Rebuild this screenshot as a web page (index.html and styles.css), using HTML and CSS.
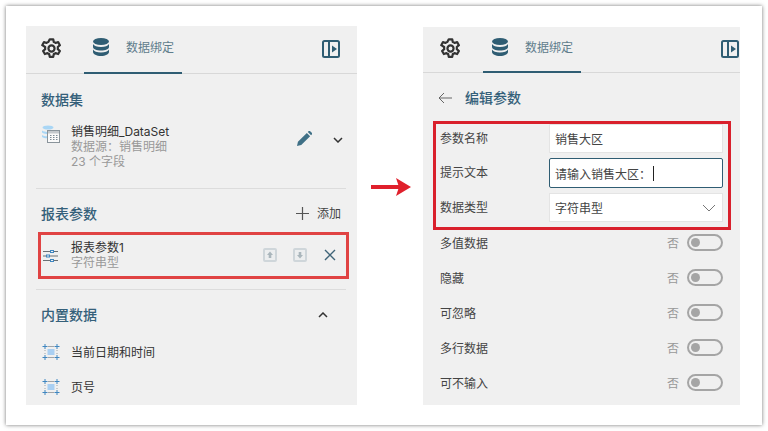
FILE: index.html
```html
<!DOCTYPE html>
<html lang="zh">
<head>
<meta charset="utf-8">
<title>数据绑定</title>
<link rel="stylesheet" href="styles.css">
</head>
<body>
<svg class="defs" width="0" height="0" aria-hidden="true">
  <defs>
    <symbol id="gear" viewBox="0 0 24 24"><path fill="none" stroke="#333" stroke-width="2.500" stroke-linejoin="round" d="M10 1.500h4l.6 3.100a7.500 7.500 0 0 1 2 1.100l3-1 2 3.500-2.400 2.100a7.500 7.500 0 0 1 0 2.400l2.400 2.100-2 3.500-3-1a7.500 7.500 0 0 1-2 1.100l-.6 3.100h-4l-.6-3.100a7.500 7.500 0 0 1-2-1.100l-3 1-2-3.500 2.400-2.100a7.500 7.500 0 0 1 0-2.400L1.400 8.200l2-3.500 3 1a7.500 7.500 0 0 1 2-1.100z"/><circle cx="12" cy="12" r="3.500" fill="none" stroke="#333" stroke-width="2.500"/></symbol>
    <symbol id="db" viewBox="0 0 16 18"><ellipse cx="8" cy="3.500" rx="8" ry="3.500" fill="#2f5d73"/><path fill="#2f5d73" d="M0 6c1 2 4 3 8 3s7-1 8-3v3c0 2-3.500 3.500-8 3.500S0 11 0 9zM0 11.500c1 2 4 3 8 3s7-1 8-3V14c0 2.200-3.500 4-8 4s-8-1.800-8-4z"/></symbol>
    <symbol id="dock" viewBox="0 0 18 18"><rect x="1" y="1" width="16" height="16" rx="1.500" fill="none" stroke="#2f5d73" stroke-width="2"/><path d="M7 1v16" stroke="#2f5d73" stroke-width="2"/><path d="M10 5.500l5 3.500-5 3.500z" fill="#2f5d73"/></symbol>
    <symbol id="field" viewBox="0 0 18 16"><path d="M6 2.500h6M6 13.500h6M3 6v1M3 9v1M15 6v1M15 9v1" stroke="#a0a4a8" fill="none"/><path d="M3 0v5M.5 2.500h5M15 0v5M12.500 2.500h5M3 11v5M.5 13.500h5M15 11v5M12.500 13.500h5" stroke="#3f86c0" fill="none"/><rect x="5.500" y="5" width="7" height="6" fill="#a9cff2"/></symbol>
    <symbol id="toggle" viewBox="0 0 36 17"><rect x="1" y="1" width="34" height="15" rx="7.500" fill="none" stroke="#a5a5a5" stroke-width="2"/><circle cx="8.500" cy="8.500" r="4.500" fill="#a5a5a5"/></symbol>
  </defs>
</svg>
<main class="card">
  <section class="panel panel-left">
    <header class="tabs">
      <svg class="gear"><use href="#gear"/></svg>
      <div class="tab">
        <svg class="db"><use href="#db"/></svg>
        <span class="tab-label">数据绑定</span>
      </div>
      <svg class="dock"><use href="#dock"/></svg>
    </header>
    <div class="group group-data">
      <h2 class="heading">数据集</h2>
      <div class="dataset">
        <svg class="ds-icon" viewBox="0 0 18 18">
          <ellipse cx="6" cy="2.500" rx="5.500" ry="2" fill="#a9d6f5"/>
          <path d="M0 5.500c1.500 1 3.500 1.300 5 1.400v2C3 9 1 8.500 0 7.500zM0 10c1 .8 3 1.200 5 1.300v2c-2 0-4-.5-5-1.300z" fill="#a9d6f5"/>
          <rect x="5.500" y="5.500" width="12" height="12" fill="#fafafa" stroke="#8a949b"/>
          <rect x="6" y="6" width="11" height="2.500" fill="#c3c8cc"/>
          <path d="M8 10.500h1.500M11 10.500h1.500M14 10.500h1.500M8 12.500h1.500M11 12.500h1.500M14 12.500h1.500M8 14.500h1.500M11 14.500h1.500M14 14.500h1.500" stroke="#7c8a94"/>
        </svg>
        <div class="ds-text">
          <div class="primary">销售明细_DataSet</div>
          <div class="secondary">数据源：销售明细</div>
          <div class="secondary">23 个字段</div>
        </div>
        <svg class="pencil" viewBox="0 0 16 16"><path fill="#3f7086" d="M0 16l1-4.500L10.500 2l3.500 3.500L4.500 15zM11.500 1l1-1a1 1 0 0 1 1.300 0l2.200 2.200a1 1 0 0 1 0 1.300l-1 1z"/></svg>
        <svg class="chev" viewBox="0 0 10 6"><path d="M1 1l4 4 4-4" fill="none" stroke="#333" stroke-width="1.500"/></svg>
      </div>
    </div>
    <div class="group group-params">
      <div class="heading-row">
        <h2 class="heading">报表参数</h2>
        <span class="add"><svg class="plus" viewBox="0 0 13 13"><path d="M6.500 0v13M0 6.500h13" stroke="#555" stroke-width="1.200"/></svg>添加</span>
      </div>
      <div class="param-row">
        <svg class="param-icon" viewBox="0 0 15 12">
          <path d="M0 1.500h7M11 1.500h4M0 6h3M7 6h8M0 10.500h7M11 10.500h4" stroke="#6b7074"/>
          <rect x="7.500" y="0.500" width="3" height="2" fill="none" stroke="#3f86c0"/>
          <rect x="3.500" y="5" width="3" height="2" fill="none" stroke="#3f86c0"/>
          <rect x="7.500" y="9.500" width="3" height="2" fill="none" stroke="#3f86c0"/>
        </svg>
        <div class="ds-text param-text">
          <div class="primary">报表参数1</div>
          <div class="secondary">字符串型</div>
        </div>
        <svg class="move" viewBox="0 0 14 14"><rect x="1" y="1" width="12" height="12" rx="1" fill="#eceeef" stroke="#cfd6da" stroke-width="2"/><path d="M7 3.500l3 3.500H8.300v3H5.700V7H4z" fill="#aab6bc"/></svg>
        <svg class="move" viewBox="0 0 14 14"><rect x="1" y="1" width="12" height="12" rx="1" fill="#eceeef" stroke="#cfd6da" stroke-width="2"/><path d="M7 10.500L4 7h1.700V4h2.600v3H10z" fill="#aab6bc"/></svg>
        <svg class="close" viewBox="0 0 12 12"><path d="M1 1l10 10M11 1L1 11" stroke="#3f6478" stroke-width="1.400"/></svg>
      </div>
    </div>
    <div class="group group-builtin">
      <div class="heading-row heading-builtin">
        <h2 class="heading">内置数据</h2>
        <svg class="chev chev-up" viewBox="0 0 10 6"><path d="M1 5l4-4 4 4" fill="none" stroke="#333" stroke-width="1.500"/></svg>
      </div>
      <div class="builtin-item"><svg class="field"><use href="#field"/></svg><span class="primary">当前日期和时间</span></div>
      <div class="builtin-item"><svg class="field"><use href="#field"/></svg><span class="primary">页号</span></div>
    </div>
  </section>

  <svg class="arrow" viewBox="0 0 40 18"><path d="M0 7h28v4H0z" fill="#e0202c"/><path d="M25 0l15 9-15 9 3-9z" fill="#e0202c"/></svg>

  <section class="panel panel-right">
    <header class="tabs">
      <svg class="gear"><use href="#gear"/></svg>
      <div class="tab">
        <svg class="db"><use href="#db"/></svg>
        <span class="tab-label">数据绑定</span>
      </div>
      <svg class="dock"><use href="#dock"/></svg>
    </header>
    <div class="edit-title">
      <svg class="back" viewBox="0 0 14 12"><path d="M14 6H1M6 1L1 6l5 5" fill="none" stroke="#666" stroke-width="1"/></svg>
      <h2 class="heading">编辑参数</h2>
    </div>
    <div class="frame">
      <div class="form-row"><span class="label">参数名称</span><div class="input">销售大区</div></div>
      <div class="form-row form-row-tall"><span class="label">提示文本</span><div class="input input-focus">请输入销售大区：<i class="caret"></i></div></div>
      <div class="form-row"><span class="label">数据类型</span><div class="input input-select">字符串型<svg class="select-chev" viewBox="0 0 14 8"><path d="M1 1l6 6 6-6" fill="none" stroke="#777" stroke-width="1"/></svg></div></div>
    </div>
    <div class="switches">
      <div class="switch-row"><span class="label">多值数据</span><span class="no">否</span><svg class="toggle"><use href="#toggle"/></svg></div>
      <div class="switch-row"><span class="label">隐藏</span><span class="no">否</span><svg class="toggle"><use href="#toggle"/></svg></div>
      <div class="switch-row"><span class="label">可忽略</span><span class="no">否</span><svg class="toggle"><use href="#toggle"/></svg></div>
      <div class="switch-row"><span class="label">多行数据</span><span class="no">否</span><svg class="toggle"><use href="#toggle"/></svg></div>
      <div class="switch-row"><span class="label">可不输入</span><span class="no">否</span><svg class="toggle"><use href="#toggle"/></svg></div>
    </div>
  </section>
</main>
</body>
</html>
```
FILE: styles.css
```css
* { box-sizing: border-box; }
html, body { margin: 0; padding: 0; background: #fff; }
body {
  width: 768px;
  height: 431px;
  overflow: hidden;
  padding: 6px;
  font-family: "Inter", "Noto Sans CJK SC", sans-serif;
  font-size: 12px;
  color: #333;
}
.defs { position: absolute; }
.card {
  width: 756px;
  height: 419px;
  background: #fff;
  box-shadow: 0 0 4px rgba(0,0,0,.55);
  display: flex;
  align-items: flex-start;
  padding: 20px 22px 20px 20px;
}
.panel { background: #f0f0f0; height: 379px; overflow: hidden; flex: none; }
.panel-left { width: 331px; }
.panel-right { width: 317px; margin-top: 1px; height: 378px; }
.arrow { width: 40px; height: 18px; margin: 152px 12px 0 14px; flex: none; }

.tabs {
  height: 48px;
  display: flex;
  align-items: center;
  border-bottom: 1px solid #d8d8d8;
  padding-left: 15px;
}
.panel-right .tabs { height: 46px; padding-left: 17px; }
.gear { width: 21px; height: 21px; flex: none; margin-top: -2px; }
.tab {
  width: 98px;
  height: 48px;
  margin-left: 22px;
  padding-left: 9px;
  display: flex;
  align-items: center;
  border-bottom: 2px solid #2f5d73;
}
.panel-right .tab { height: 46px; }
.db { width: 16px; height: 18px; flex: none; margin-top: -3px; }
.tab-label { margin-left: 17px; font-size: 12px; color: #5f7d8c; margin-top: -4px; }
.dock { width: 18px; height: 18px; margin-left: 140px; margin-top: -2px; flex: none; }

.heading { margin: 0; font-size: 14px; font-weight: 500; color: #35607a; line-height: 20px; }

.group { margin: 0 11px 0 10px; padding: 0 5px; border-bottom: 1px solid #dcdcdc; }
.group-data { height: 115px; padding-top: 16px; }
.group-params { height: 101px; padding-top: 15px; }
.group-builtin { border-bottom: 0; padding-top: 15px; }

.dataset { display: flex; align-items: flex-start; margin-top: 14px; }
.ds-icon { width: 18px; height: 18px; margin: 1px 11px 0 1px; flex: none; }
.ds-text { flex: 1; line-height: 15px; }
.primary { font-size: 12px; color: #333; }
.secondary { font-size: 12px; color: #999; }
.pencil { width: 15px; height: 15px; margin: 7px 21px 0 0; flex: none; }
.chev { width: 10px; height: 6px; flex: none; margin: 13px -2px 0 0; }

.heading-row { display: flex; align-items: center; justify-content: space-between; }
.heading-builtin { margin-bottom: 9px; }
.add { display: flex; align-items: center; gap: 8px; font-size: 12px; line-height: 16px; color: #444; margin-top: -1px; }
.plus { width: 13px; height: 13px; }
.chev-up { margin: 0 13px 0 0; }

.param-row {
  display: flex;
  align-items: center;
  width: 311px;
  height: 47px;
  margin: 8px 0 0 -3px;
  padding: 0 10px 0 2px;
  border: 3px solid #e04343;
}
.param-icon { width: 15px; height: 12px; margin-right: 13px; flex: none; }
.param-text { margin-top: -2px; }
.move { width: 14px; height: 14px; flex: none; margin: -2px 16px 0 0; }
.close { width: 12px; height: 12px; flex: none; margin: -2px 0 0 1px; }

.builtin-item { display: flex; align-items: center; height: 35px; }
.field { width: 18px; height: 16px; margin-right: 11px; margin-left: 1px; flex: none; }

.edit-title { display: flex; align-items: center; padding: 1px 0 0 15px; height: 48px; }
.back { width: 14px; height: 12px; margin-right: 13px; flex: none; }

.frame {
  display: flex;
  flex-direction: column;
  gap: 5px;
  margin-left: 10px;
  width: 298px;
  height: 109px;
  border: 3px solid #d9202c;
}
.form-row { display: flex; align-items: center; height: 29px; padding: 0 5px 0 4px; }
.form-row-tall { height: 30px; }
.form-row .label { width: 109px; margin-top: -3px; }
.label { font-size: 12px; color: #444; flex: none; }
.input {
  flex: 1;
  height: 100%;
  display: flex;
  align-items: center;
  padding: 0 5px;
  background: #fff;
  border: 1px solid #e4e4e4;
  font-size: 12px;
  color: #444;
}
.input-focus { border-color: #2f5d73; border-radius: 2px; }
.input-select { justify-content: space-between; padding-right: 6px; }
.caret { display: block; width: 1px; height: 15px; background: #222; margin-left: 2px; }
.select-chev { width: 14px; height: 8px; }

.switches { margin-top: -5px; }
.switch-row { display: flex; align-items: center; height: 35px; padding: 0 17px; }
.switch-row .label { flex: 1; }
.no { color: #999; font-size: 12px; margin-right: 8px; }
.toggle { width: 36px; height: 17px; flex: none; }
```
